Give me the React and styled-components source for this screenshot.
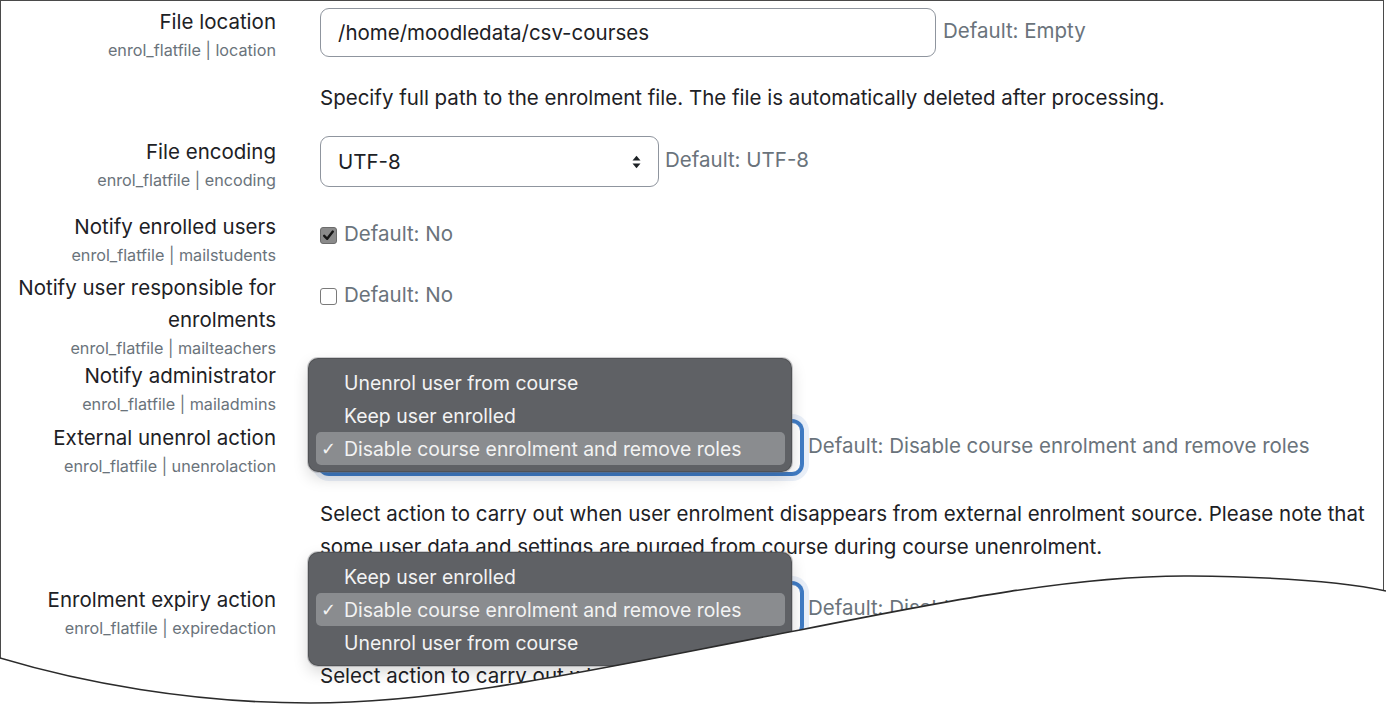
import React from "react";
import styled, {createGlobalStyle, css} from "styled-components";

const GlobalStyle = createGlobalStyle`
	html, body {
		margin: 0;
		padding: 0;
		background: #fff;
	}
	body {
		font-family: Inter, "Liberation Sans", Arial, sans-serif;
		color: #1d2125;
	}
	* {
		box-sizing: border-box;
	}
`;

const Page = styled.div`
	position: relative;
	width: 1386px;
	height: 712px;
	overflow: hidden;
`;

const Frame = styled.div`
	width: 1384px;
	height: 712px;
	border: 1px solid #4a4a4a;
	border-bottom: none;
	padding-top: 5px;
`;

const Row = styled.div`
	display: grid;
	grid-template-columns: 275px 1fr;
	column-gap: 44px;
	align-items: start;
	margin-bottom: ${(props) => props.$after || 0}px;
`;

const LabelCell = styled.div`
	text-align: right;
`;

const Label = styled.div`
	font-size: 20.5px;
	line-height: 32px;
	color: #1d2125;
`;

const SubLabel = styled.div`
	font-size: 16.2px;
	line-height: 24px;
	color: #6a737b;
`;

const ControlCell = styled.div`
	padding-top: ${(props) => props.$top || 0}px;
	min-width: 0;
`;

const ControlLine = styled.div`
	display: flex;
	align-items: center;
	gap: ${(props) => props.$gap || 7}px;
`;

const TextInput = styled.input`
	width: 616px;
	height: 49px;
	padding: 0 17px;
	border: 1px solid #8f959e;
	border-radius: 9px;
	font-family: inherit;
	font-size: 20.5px;
	color: #1d2125;
	background: #fff;
	outline: none;
`;

const SelectWrap = styled.div`
	position: relative;
	flex: none;
`;

const SelectBox = styled.div`
	width: ${(props) => props.$width}px;
	height: 51px;
	padding: 0 17px;
	display: flex;
	align-items: center;
	justify-content: space-between;
	border: 1px solid #8f959e;
	border-radius: 9px;
	font-size: 20.5px;
	background: #fff;

	${(props) =>
		props.$focused &&
		css`
			border-color: #3f7bc4;
			box-shadow: 0 0 0 3px #3f7bc4, 0 0 0 8px #e9eff8;
		`}

	& svg {
		flex: none;
		width: 9px;
		height: 14px;
		color: #1d2125;
	}
`;

const DefaultInfo = styled.span`
	font-size: 20.5px;
	line-height: 32px;
	color: #6a737b;
	white-space: nowrap;
	margin-bottom: 3px;
`;

const Check = styled.span`
	flex: none;
	width: 17px;
	height: 17px;
	border-radius: 3px;
	display: inline-flex;
	align-items: center;
	justify-content: center;
	${(props) =>
		props.$checked
			? css`
					background: #8a8a8a;
					border: 1px solid #6c6c6c;
			  `
			: css`
					background: #fff;
					border: 1px solid #7a7a7a;
			  `}

	& svg {
		width: 13px;
		height: 13px;
	}
`;

const Description = styled.p`
	margin: 24px 0 0;
	font-size: 20.5px;
	line-height: 33px;
	color: #1d2125;
	padding-right: 8px;
`;

const Popup = styled.ul`
	position: absolute;
	z-index: 2;
	left: -11px;
	top: ${(props) => props.$top}px;
	width: 482px;
	margin: 0;
	padding: 7px 6px 6px 7px;
	list-style: none;
	background: #5f6165;
	border-radius: 9px;
	box-shadow: 0 0 0 1px #505255, 0 0 0 2px rgba(120, 120, 125, 0.35),
		0 6px 16px rgba(0, 0, 0, 0.18);
`;

const PopupItem = styled.li`
	position: relative;
	height: 33px;
	padding-left: 28px;
	display: flex;
	align-items: center;
	font-size: 19.4px;
	color: #f3f3f3;
	border-radius: 5px;
	background: ${(props) => (props.$selected ? "#8a8c8f" : "transparent")};
`;

const Tick = styled.span`
	position: absolute;
	left: 5px;
	top: 50%;
	transform: translateY(-52%);
	font-family: "DejaVu Sans", sans-serif;
	font-size: 18px;
`;

const TornEdge = styled.svg`
	position: absolute;
	left: 0;
	top: 0;
	z-index: 5;
	pointer-events: none;
`;

const WAVE =
	"M0 658 C80 682 190 703 310 703 C450 703 600 668 800 630 C950 600 1080 575 1190 576 C1290 577 1350 583 1386 591";

function Arrows() {
	return (
		<svg viewBox="0 0 9 14" fill="currentColor">
			<path d="M0.5 5.5 L4.5 0.8 L8.5 5.5 Z" />
			<path d="M0.5 8.5 L4.5 13.2 L8.5 8.5 Z" />
		</svg>
	);
}

function Checkbox({checked}) {
	return (
		<Check $checked={checked}>
			{checked && (
				<svg viewBox="0 0 13 13" fill="none">
					<path d="M2.2 6.8 L5.2 9.8 L10.8 2.6" stroke="#161616" strokeWidth="2.4" strokeLinecap="round" strokeLinejoin="round" />
				</svg>
			)}
		</Check>
	);
}

function Setting({label, name, after, top, children}) {
	return (
		<Row $after={after}>
			<LabelCell>
				{label.map((line) => (
					<Label key={line}>{line}</Label>
				))}
				<SubLabel>enrol_flatfile | {name}</SubLabel>
			</LabelCell>
			<ControlCell $top={top}>{children}</ControlCell>
		</Row>
	);
}

function ActionMenu({items, top}) {
	const selected = "Disable course enrolment and remove roles";
	return (
		<Popup $top={top}>
			{items.map((item) => (
				<PopupItem key={item} $selected={item === selected}>
					{item === selected && <Tick>✓</Tick>}
					{item}
				</PopupItem>
			))}
		</Popup>
	);
}

function ActionSelect({items, menuTop}) {
	return (
		<ControlLine $gap={7}>
			<SelectWrap>
				<SelectBox $width={481} $focused>
					<span>Disable course enrolment and remove roles</span>
					<Arrows />
				</SelectBox>
				<ActionMenu items={items} top={menuTop} />
			</SelectWrap>
			<DefaultInfo>Default: Disable course enrolment and remove roles</DefaultInfo>
		</ControlLine>
	);
}

export default function App() {
	return (
		<>
			<GlobalStyle />
			<Page>
				<Frame>
					<Setting label={["File location"]} name="location" after={22} top={2}>
						<ControlLine>
							<TextInput readOnly defaultValue="/home/moodledata/csv-courses" />
							<DefaultInfo>Default: Empty</DefaultInfo>
						</ControlLine>
						<Description>
							Specify full path to the enrolment file. The file is automatically deleted after processing.
						</Description>
					</Setting>

					<Setting label={["File encoding"]} name="encoding" after={19}>
						<ControlLine $gap={6}>
							<SelectBox $width={339}>
								<span>UTF-8</span>
								<Arrows />
							</SelectBox>
							<DefaultInfo>Default: UTF-8</DefaultInfo>
						</ControlLine>
					</Setting>

					<Setting label={["Notify enrolled users"]} name="mailstudents" after={5} top={7}>
						<ControlLine>
							<Checkbox checked />
							<DefaultInfo>Default: No</DefaultInfo>
						</ControlLine>
					</Setting>

					<Setting label={["Notify user responsible for", "enrolments"]} name="mailteachers" top={7}>
						<ControlLine>
							<Checkbox />
							<DefaultInfo>Default: No</DefaultInfo>
						</ControlLine>
					</Setting>

					<Setting label={["Notify administrator"]} name="mailadmins" after={6} top={7}>
						<ControlLine>
							<Checkbox />
							<DefaultInfo>Default: No</DefaultInfo>
						</ControlLine>
					</Setting>

					<Setting label={["External unenrol action"]} name="unenrolaction" after={21}>
						<ActionSelect
							menuTop={-63}
							items={[
								"Unenrol user from course",
								"Keep user enrolled",
								"Disable course enrolment and remove roles",
							]}
						/>
						<Description>
							Select action to carry out when user enrolment disappears from external enrolment source. Please note
							that some user data and settings are purged from course during course unenrolment.
						</Description>
					</Setting>

					<Setting label={["Enrolment expiry action"]} name="expiredaction">
						<ActionSelect
							menuTop={-31}
							items={[
								"Keep user enrolled",
								"Disable course enrolment and remove roles",
								"Unenrol user from course",
							]}
						/>
						<Description>
							Select action to carry out when user enrolment expires. Please note that some user data and settings
							are purged from course during course unenrolment.
						</Description>
					</Setting>
				</Frame>

				<TornEdge width="1386" height="712" viewBox="0 0 1386 712">
					<path d={`${WAVE} L1386 712 L0 712 Z`} fill="#fff" />
					<path d={WAVE} fill="none" stroke="#2b2b2b" strokeWidth="1.6" />
				</TornEdge>
			</Page>
		</>
	);
}
